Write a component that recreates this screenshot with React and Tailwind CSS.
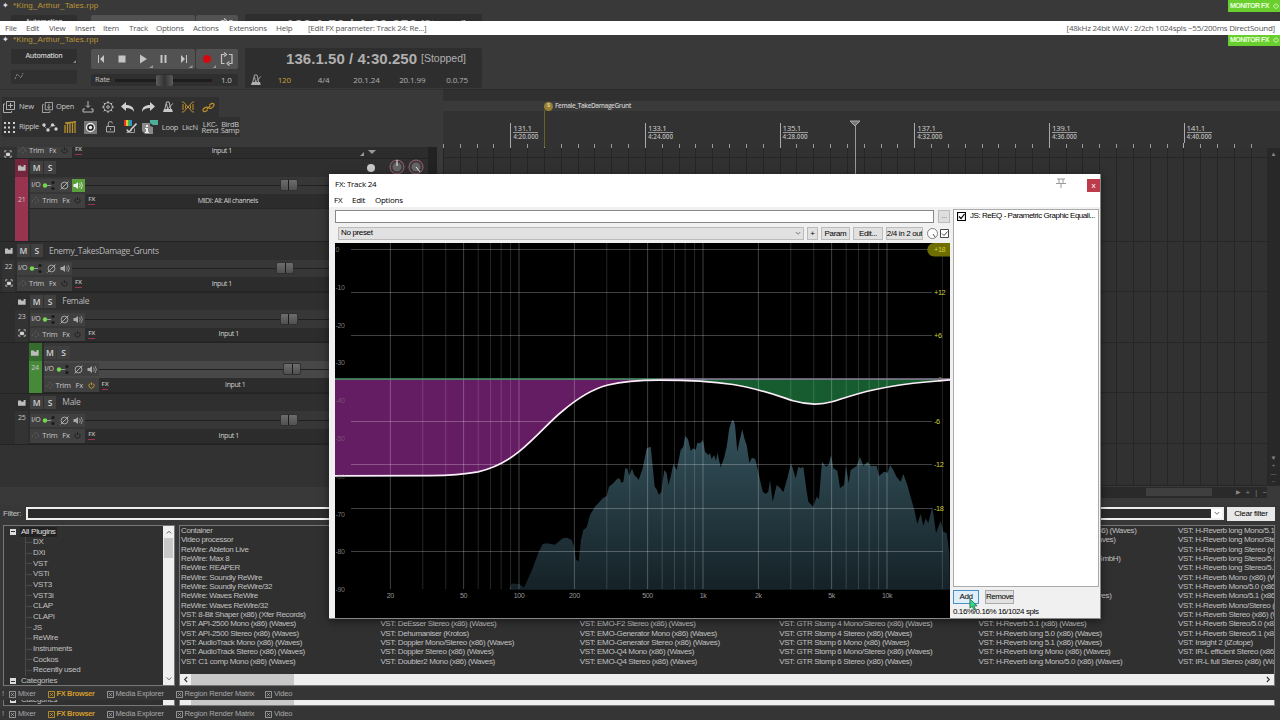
import React from 'react'

const tree = ['DX', 'DXi', 'VST', 'VSTi', 'VST3', 'VST3i', 'CLAP', 'CLAPi', 'JS', 'ReWire', 'Instruments', 'Cockos', 'Recently used']

// columns of the plugin list, "skip" is the number of rows sitting under the fx window
const columns = [
    { skip: 0, rows: ['Container', 'Video processor', 'ReWire: Ableton Live', 'ReWire: Max 8', 'ReWire: REAPER', 'ReWire: Soundly ReWire', 'ReWire: Soundly ReWire/32', 'ReWire: Waves ReWire', 'ReWire: Waves ReWire/32', 'VST: 8-Bit Shaper (x86) (Xfer Records)', 'VST: API-2500 Mono (x86) (Waves)', 'VST: API-2500 Stereo (x86) (Waves)', 'VST: AudioTrack Mono (x86) (Waves)', 'VST: AudioTrack Stereo (x86) (Waves)', 'VST: C1 comp Mono (x86) (Waves)'] },
    { skip: 10, rows: ['VST: DeEsser Stereo (x86) (Waves)', 'VST: Dehumaniser (Krotos)', 'VST: Doppler Mono/Stereo (x86) (Waves)', 'VST: Doppler Stereo (x86) (Waves)', 'VST: Doubler2 Mono (x86) (Waves)'] },
    { skip: 10, rows: ['VST: EMO-F2 Stereo (x86) (Waves)', 'VST: EMO-Generator Mono (x86) (Waves)', 'VST: EMO-Generator Stereo (x86) (Waves)', 'VST: EMO-Q4 Mono (x86) (Waves)', 'VST: EMO-Q4 Stereo (x86) (Waves)'] },
    { skip: 10, rows: ['VST: GTR Stomp 4 Mono/Stereo (x86) (Waves)', 'VST: GTR Stomp 4 Stereo (x86) (Waves)', 'VST: GTR Stomp 6 Mono (x86) (Waves)', 'VST: GTR Stomp 6 Mono/Stereo (x86) (Waves)', 'VST: GTR Stomp 6 Stereo (x86) (Waves)'] },
    { skip: 0, rows: [['(x86) (Waves)', 158], ['(Waves)', 137], '', ['GmbH)', 142], '', '', '', ['(Waves)', 133], '', '', 'VST: H-Reverb 5.1 (x86) (Waves)', 'VST: H-Reverb long 5.0 (x86) (Waves)', 'VST: H-Reverb long 5.1 (x86) (Waves)', 'VST: H-Reverb long Mono (x86) (Waves)', 'VST: H-Reverb long Mono/5.0 (x86) (Waves)'] },
    { skip: 0, rows: ['VST: H-Reverb long Mono/5.1 (x86)', 'VST: H-Reverb long Mono/Stereo (x86)', 'VST: H-Reverb long Stereo (x86) (Waves)', 'VST: H-Reverb long Stereo/5.0 (x86)', 'VST: H-Reverb long Stereo/5.1 (x86)', 'VST: H-Reverb Mono (x86) (Waves)', 'VST: H-Reverb Mono/5.0 (x86) (Waves)', 'VST: H-Reverb Mono/5.1 (x86) (Waves)', 'VST: H-Reverb Mono/Stereo (x86)', 'VST: H-Reverb Stereo (x86) (Waves)', 'VST: H-Reverb Stereo/5.0 (x86)', 'VST: H-Reverb Stereo/5.1 (x86)', 'VST: Insight 2 (iZotope)', 'VST: IR-L efficient Stereo (x86) (Waves)', 'VST: IR-L full Stereo (x86) (Waves)'] },
]

const spectrum = '509,589.7 511.7,583.5 519,584 524,587.5 528.3,578.3 533.3,566.7 538.3,553 542.7,544 546.7,543.3 555,544.7 562.7,538.3 567.3,537.7 571.7,540 574,546.7 576,560 578.7,561 581,540 583.3,530 586.7,527.3 590,515 595,506.7 603.3,497.7 606.7,496 609,486.7 613.3,483.3 617.7,478.3 620,479 621.3,482.7 623.3,482 625.3,468.3 627.3,468.7 629.3,476 632,468.7 634.3,475 636.7,477.3 638.7,480 642.7,468.3 646.7,448.3 650.7,446.7 652.7,466.7 654.7,486.7 656.7,489.3 658.7,494.7 661.3,492.3 664.3,470 666.7,473.3 668.3,485 670.7,476.7 673.3,464 676.7,470 680.7,450 683.3,446.7 685.3,436 688,439.3 690.7,450.7 693.3,448.3 695.7,450 697.3,442.7 700,443.3 703,440 705,451.7 708.3,455 710,453.3 711.7,459.3 714,455 716,460.7 717.3,452.7 720.7,467.3 724,458.3 726.7,446.7 729.3,428.3 732,420.3 733.7,420.7 735,425 737.3,451.7 739.3,441.7 742.3,429.3 744.3,438.3 746.7,445 749.3,462.7 752,457.7 755.3,459 759.3,476.7 762.7,491.7 765.7,494 768.3,491.7 770,480 772.7,501.7 776.7,485 780,487.7 783.3,492.3 787.3,478.3 791,463.3 793.3,470 795.7,478.3 798.3,466.7 800.7,468.3 803.3,466.7 806,486.7 808.3,501.7 813.3,506.7 816.7,496.7 819,499.3 822,461.7 826,466.7 828.7,465 831,455 833.3,468.3 837.3,470.7 840,488 844,485 846,466 848.7,483.3 850.7,470 856.7,466 860,456.7 863.3,466 867.7,461.7 870.7,466 876.7,466 879,476 884,471.7 887.7,472.7 890,465 893.3,470 896.7,477.3 900.7,481.7 903.3,474 907.3,485 911,498.3 914.3,510 917.3,524 920.7,514 923.3,526 925.7,518.3 928.3,523.3 932.3,506.7 936,533.3 940.7,520.7 943.3,531.7 946.7,533.3 949.3,553.3 950,589.7'

const curve = 'M335 475.8 L430 475.7 C450 475.5 465 474.2 478 471.8 C495 468 508 460.5 519 451.7 C537 437 550 421 562 411.5 C576 399.5 590 389.5 608 385 C625 380.8 640 380.2 660 380.2 C690 380.2 712 381.5 733 384.5 C757 388 775 394.8 793 400.8 C805 404.3 820 405 832 401.8 C845 397.8 857 393.5 873 390 C892 385.8 910 383.2 926 382 L950 379.8'

// log frequency scale of the eq, 184px for a decade
const fx = (f) => 519 + 184 * Math.log10(f / 100)
const freqs = [20, 30, 40, 50, 60, 70, 80, 90, 100, 200, 300, 400, 500, 600, 700, 800, 900, 1000, 2000, 3000, 4000, 5000, 6000, 7000, 8000, 9000, 10000, 20000]

function Power({ className }) {
    return (
        <svg viewBox="0 0 10 10" className={className} fill="none" stroke="currentColor" strokeWidth="1.2">
            <path d="M3 2a3.7 3.7 0 1 0 4 0M5 .5v4" />
        </svg>
    )
}

function Metronome({ className }) {
    return (
        <svg viewBox="0 0 12 12" className={className} fill="none" stroke="currentColor">
            <path d="M4.5 1h2.6l2 9H2.4z" strokeWidth=".9" />
            <path d="M1 11h9.8l-.8-3H2z" fill="currentColor" stroke="none" />
            <path d="M5.6 8L4.6 3M5.8 8l5-5.6" strokeWidth=".9" />
        </svg>
    )
}

function Folder({ className }) {
    return <svg viewBox="0 0 10 8" className={className} fill="currentColor"><path d="M0 1.500h3.500l1 1.500H7V1h2.500v7H0z" /></svg>
}

function Transport({ className }) {
    return (
        <div className={`flex flex-col shrink-0 h-[54px] ${className}`}>
            <div className="flex justify-between h-[12px] font-['Liberation_Sans'] leading-[12px]">
                <div className="flex">
                    <span className="w-[13px] pl-[2px] text-[8px] text-gray-200">✦</span>
                    <span className="text-[8px] tracking-[0.14px] text-[#b99434]">*King_Arthur_Tales.rpp</span>
                </div>
                <div className="flex items-center w-[52px] pl-[2px] gap-[4px] bg-[#69cf2f] text-[7px] text-[#eaffdc]">
                    <span className="w-[39px] whitespace-nowrap tracking-[-0.48px] font-semibold">MONITOR FX</span>
                    <Power className="size-[6px] shrink-0" />
                </div>
            </div>
            <div className="flex pt-[2px] pl-[1px]">
                <div className="flex flex-col gap-[6px] w-[80px] pl-[10px] pt-[1px]">
                    <div className="relative flex justify-center items-center w-[66px] h-[15px] bg-[#2f2f2f] text-[7px] tracking-[-0.35px] font-semibold text-[#d0d0d0]">
                        Automation
                        <svg viewBox="0 0 4 4" className="absolute right-[1px] bottom-[1px] size-[3px] fill-[#888]"><path d="M4 0v4H0z" /></svg>
                    </div>
                    <div className="w-[66px] h-[14px] bg-[#303030] pl-[3px] pt-[2px]">
                        <svg viewBox="0 0 11 8" className="w-[11px] h-[8px]" fill="none" stroke="#999"><path d="M1 7l2-5 4 4 2-5" strokeWidth=".8" strokeDasharray="2 1" /></svg>
                    </div>
                </div>
                <div className="flex flex-col w-[157px] pl-[10px] gap-[5px]">
                    <div className="flex gap-[1px] pt-[1px]">
                        <svg viewBox="0 0 104 20" className="w-[104px] h-[20px] rounded-[2px] bg-[#525252]" fill="#c4c4c4">
                            <path d="M7 6h1v8H7zM13 6v8l-4-4z" />
                            <path d="M27.500 6.500h7v7h-7z" />
                            <path d="M49 5.500l7 4.500-7 4.500z" />
                            <path d="M69.500 6h2v8h-2zM73.500 6h2v8h-2z" />
                            <path d="M90 6v8l4-4zM95 6h1v8h-1z" />
                            <path d="M62 16l-4 3h4zM101.500 16l-4 3h4z" fill="#999" />
                        </svg>
                        <svg viewBox="0 0 42 20" className="w-[42px] h-[20px] rounded-[2px] bg-[#525252]">
                            <circle cx="11" cy="10" r="4" fill="#d6080e" />
                            <path d="M28.500 5.500h-3v9h3M33 5.500h3v9h-3M28 3.500l2.500 2-2.500 2M33.500 12.500l-2.500 2 2.500 2" fill="none" stroke="#c4c4c4" strokeWidth="1.200" />
                            <path d="M20 16l-3 3h3z" fill="#999" />
                        </svg>
                    </div>
                    <div className="flex items-center h-[12px] bg-[#2f2f2f] text-[7.500px] text-[#c0c0c0] rounded-[2px]">
                        <span className="w-[24px] pl-[4px] tracking-[-0.2px]">Rate</span>
                        <div className="flex items-center w-[97px] h-[3px] bg-[#1d1d1d]"><div className="ml-[41px] w-[17px] h-[11px] rounded-[2px] bg-gradient-to-r from-[#5d5d5d] via-[#333] to-[#5d5d5d]" /></div>
                        <span className="pl-[9px] text-[8px] tracking-[-0.2px]">1.0</span>
                    </div>
                </div>
                <div className="w-[237px] h-[40px] ml-[7px] bg-[#2e2e2e] flex flex-col rounded-[2px]">
                    <div className="flex items-center h-[22px] pl-[41px] gap-[3px] font-['Liberation_Sans'] text-[#b0b0b0] whitespace-nowrap">
                        <span className="text-[15px] tracking-[0.05px] font-bold w-[132px]">136.1.50 / 4:30.250</span>
                        <span className="text-[10.500px]">[Stopped]</span>
                    </div>
                    <div className="flex items-center h-[18px] pt-[1px] text-[8px] tracking-[-0.1px] text-[#b0b0b0] text-center">
                        <Metronome className="size-[12px] ml-[5px]" />
                        <span className="w-[45px] text-[#c5a336]">120</span>
                        <span className="w-[34px]">4/4</span>
                        <span className="w-[52px]">20.1.24</span>
                        <span className="w-[40px]">20.1.99</span>
                        <span className="w-[50px]">0.0.75</span>
                    </div>
                </div>
            </div>
        </div>
    )
}

function MenuBar() {
    return (
        <div className="flex shrink-0 items-center h-[14px] bg-white text-[8px] leading-[12px] tracking-[-0.25px] text-[#555] pl-[5px] pr-[5px] whitespace-nowrap">
            <span className="w-[21px]">File</span>
            <span className="w-[23px]">Edit</span>
            <span className="w-[26px]">View</span>
            <span className="w-[28px]">Insert</span>
            <span className="w-[26px]">Item</span>
            <span className="w-[27px]">Track</span>
            <span className="w-[37px]">Options</span>
            <span className="w-[36px]">Actions</span>
            <span className="w-[47px]">Extensions</span>
            <span className="w-[32px]">Help</span>
            <span>[Edit FX parameter: Track 24: Re...]</span>
            <span className="ml-auto">[48kHz 24bit WAV : 2/2ch 1024spls ~55/200ms DirectSound]</span>
        </div>
    )
}

function Tool({ children }) {
    return <div className="flex items-center justify-center w-[20px] h-[20px] leading-[6.500px] text-center">{children}</div>
}

function Toolbar() {
    return (
        <div className="flex flex-col items-start pl-[2px] pt-[7px] h-[57px] text-[7.500px] tracking-[-0.3px] text-[#c8c8c8]">
            <div className="flex bg-[#303030] h-[20px] pr-[1px]">
                <div className="flex items-center w-[38px] gap-[4px] pl-[1px]">
                    <svg viewBox="0 0 12 12" className="size-[12px]" fill="none" stroke="#bbb" strokeWidth=".9"><path d="M3.500.5h8v8h-8zM7.500 2v5M5 4.500h5M2 3H.5v8.500h8V10" /></svg>
                    New
                </div>
                <div className="flex items-center w-[38px] gap-[3px] pl-[2px]">
                    <svg viewBox="0 0 12 12" className="size-[11px]" fill="none" stroke="#bbb" strokeWidth=".9"><path d="M3.500.5h8v8h-8zM7.500 2v5M5.500 5l2 2 2-2M2 3H.5v8.500h8V10" /></svg>
                    Open
                </div>
                <Tool><svg viewBox="0 0 12 12" className="size-[12px]" fill="none" stroke="#bbb"><path d="M6 0v6M4 4.500l2 2 2-2M3 8H1v3h10V8H9" /></svg></Tool>
                <Tool><svg viewBox="0 0 12 12" className="size-[12px]" fill="none" stroke="#bbb"><circle cx="6" cy="6" r="4.300" /><circle cx="6" cy="6" r="1.300" /><path d="M6 0v2M6 10v2M0 6h2M10 6h2M1.700 1.700l1.300 1.300M9 9l1.300 1.300M10.300 1.700L9 3M3 9l-1.300 1.300" /></svg></Tool>
                <Tool><svg viewBox="0 0 14 11" className="w-[14px] h-[11px]"><path d="M5 0v3c5 0 8 2 8 7-1.500-3-4-4-8-4v3L0 4.500z" fill="#d0d0d0" /></svg></Tool>
                <Tool><svg viewBox="0 0 14 11" className="w-[14px] h-[11px]"><path d="M9 0v3C4 3 1 5 1 10c1.500-3 4-4 8-4v3l5-4.500z" fill="#d0d0d0" /></svg></Tool>
                <Tool><Metronome className="size-[12px]" /></Tool>
                <Tool><svg viewBox="0 0 14 12" className="w-[14px] h-[12px]" fill="none" stroke="#c2922a"><path d="M1 1h1.500l9 10H13M13 1h-1.500l-9 10H1M2 3v6M4.500 4.500v3M9.500 4.500v3M12 3v6" /></svg></Tool>
                <Tool><svg viewBox="0 0 14 12" className="w-[13px] h-[11px]" fill="none" stroke="#c2922a" strokeWidth="1.300"><path d="M6 8.500C3 12-.5 10 1.500 7.500S5 5 7 6M8 3.500C11 0 14.500 2 12.500 4.500S9 8 7 6M5 8l4-4" /></svg></Tool>
            </div>
            <div className="flex bg-[#303030] h-[20px]">
                <div className="flex items-center w-[38px] gap-[3px] pl-[1px]">
                    <svg viewBox="0 0 13 13" className="size-[13px]" fill="#d0d0d0"><path d="M1 1h2v2H1zM5 1h2v2H5zM10 1h2v2h-2zM1 5.500h2v2H1zM5 5.500h2v2H5zM10 5.500h2v2h-2zM1 10h2v2H1zM5 10h2v2H5zM10 10h2v2h-2z" /></svg>
                    Ripple
                </div>
                <Tool><svg viewBox="0 0 16 12" className="w-[16px] h-[12px]" fill="#d0d0d0"><path d="M2 5l4 4 4-5 4 1" stroke="#d0d0d0" strokeDasharray="1 1" fill="none" /><circle cx="2" cy="4" r="1.700" /><circle cx="6" cy="9" r="1.700" /><circle cx="10.500" cy="4" r="1.700" /><circle cx="14" cy="8" r="1.700" /></svg></Tool>
                <Tool><svg viewBox="0 0 13 12" className="w-[13px] h-[12px]" stroke="#b8912f" strokeWidth="1.300" fill="none"><path d="M1 4v8M3.500 2v10M6 1v11M8.500 1v11M11 0v12M1 2L12 1" /></svg></Tool>
                <Tool><svg viewBox="0 0 13 13" className="size-[13px]"><path d="M0 0h13v13H0z" fill="#777" /><circle cx="6.500" cy="6.500" r="4" fill="#222" stroke="#eee" strokeWidth="1.300" /><circle cx="6.500" cy="6.500" r="1.700" fill="#eee" /></svg></Tool>
                <Tool><svg viewBox="0 0 10 12" className="w-[9px] h-[12px]" fill="none" stroke="#bbb"><path d="M.5 5.500h9v6h-9zM2.500 5.500v-3a2.300 2.300 0 0 1 4.600-.5M5 7.500v2" /></svg></Tool>
                <Tool><svg viewBox="0 0 14 14" className="size-[14px]"><path d="M1 0h2v6H1z" fill="#d33" /><path d="M3 0h2v6H3z" fill="#e9c72f" /><path d="M5 0h2v6H5z" fill="#43b649" /><path d="M7 0h2v6H7z" fill="#2f8fd0" /><path d="M13.500 3.500L7.500 10M4 9.500q1 3.500 4.500.5" stroke="#ccc" fill="none" strokeWidth="1.600" /><path d="M3.500 12.500h8v-4" stroke="#999" fill="none" /></svg></Tool>
                <Tool><svg viewBox="0 0 16 15" className="w-[16px] h-[15px]"><path d="M8 0h8v5h-5L8 3z" fill="#4fae98" /><path d="M0 3h8v3l3 1v7H3l-3-3z" fill="#8a8a8a" /><path d="M4 5h2v2H4zM3 8h3v4h1v1H3v-1h1V9H3z" fill="#eee" /></svg></Tool>
                <Tool>Loop</Tool>
                <Tool>LkcN</Tool>
                <Tool>LKC- Rend</Tool>
                <Tool>BirdB Samp</Tool>
            </div>
        </div>
    )
}

function Buttons3({ on }) {
    return (
        <div className="flex items-center h-full w-[55px] shrink-0 bg-[#404040] text-[7.500px] text-[#c8c8c8]">
            <svg viewBox="0 0 10 10" className="size-[9px] ml-[1px]" fill="#777"><path d="M1 5h1v1H1zM3 3h1v1H3zM5 7h1v1H5zM7 3h1v1H7zM8 5h1v1H8zM5 1h1v1H5z" /></svg>
            <span className="w-[18px] pl-[2px]">Trim</span>
            <span className="w-[16px] pl-[4px]">Fx</span>
            <Power className={on ? 'size-[7px] text-[#d8a526]' : 'size-[7px] text-[#1c1c1c]'} />
        </div>
    )
}

function Row3({ on, input, mid, indent }) {
    // text is centred on its own x on the panel
    return (
        <div className="flex items-center h-[14.600px] bg-[#2c2c2c] border-b border-[#262626]">
            <Buttons3 on={on} />
            <span className="ml-[3px] pb-[1px] text-[6px] leading-[7px] font-bold text-[#aaa] border-b border-[#9a3350]">FX</span>
            <span className="text-[7px] tracking-[-0.4px] text-[#d0d0d0] w-[100px] text-center whitespace-nowrap" style={{ marginLeft: mid - 48 - 84 - indent * 13.3 }}>{input}</span>
        </div>
    )
}

function Track({ num, name, indent, color, head, knob, input, mid, on, speaker, extra, rec, selected, env }) {
    return (
        <div className="flex bg-[#2d2d2d] border-t border-[#232323]" style={{ paddingLeft: indent ? indent * 13.3 + 2 : 2 }}>
            <div className="flex flex-col items-center w-[13px] mr-[2px] text-[7px] text-[#c8c8c8]" style={{ background: color || '#333' }}>
                <div className="flex justify-center items-center w-full h-[17.500px]" style={{ background: head || '#2d2d2d' }}><Folder className="w-[8px] h-[7px] text-[#bdbdbd]" /></div>
                <span className={extra ? 'pt-[18px] leading-[9px]' : 'pt-[2px] leading-[9px]'}>{num}</span>
                {env && <svg viewBox="0 0 10 10" className="size-[8px] mt-[8px]" fill="none" stroke="#ddd"><path d="M1 3V1h2M7 1h2v2M9 7v2H7M3 9H1V7" /><path d="M3 4h4v3H3z" fill="#ddd" /></svg>}
            </div>
            <div className={selected ? 'flex-1 bg-[#484848]' : 'flex-1 bg-[#373737]'}>
                <div className={selected ? 'flex items-center h-[17.500px] bg-[#393939]' : 'flex items-center h-[17.500px] bg-[#2f2f2f]'}>
                    <div className="flex gap-[1px] text-[8.500px] font-semibold text-[#cfcfcf] text-center leading-[13px]">
                        <span className="w-[12.500px] h-[13px] bg-[#404040]">M</span>
                        <span className="w-[12.500px] h-[13px] bg-[#404040]">S</span>
                    </div>
                    <span className="pl-[6px] text-[8.500px] tracking-[-0.3px] text-[#b8b8b8]">{name}</span>
                    {rec && (
                        <svg viewBox="0 0 70 18" className="ml-auto w-[70px] h-[18px]">
                            <circle cx="13" cy="9" r="4" fill="#c8c8c8" />
                            <circle cx="39" cy="8" r="7" fill="#3a3a3a" stroke="#a06070" />
                            <circle cx="58" cy="8" r="7" fill="#3a3a3a" stroke="#a06070" />
                            <circle cx="39" cy="8" r="4.500" fill="#666" />
                            <circle cx="58" cy="8" r="4.500" fill="#666" />
                            <path d="M39 1v6M58 8l4 5" stroke="#eee" />
                        </svg>
                    )}
                </div>
                <div className="flex items-center h-[17.500px]">
                    <div className="flex items-center w-[55px] h-[13px] bg-[#404040]">
                        <span className="text-[7px] w-[12px] pl-[1px] tracking-[-0.3px] text-[#d0d0d0]">I/O</span>
                        <svg viewBox="0 0 43 13" className="w-[43px] h-[13px]">
                            <circle cx="3" cy="6.500" r="2.200" fill="#6fdc4c" />
                            <path d="M5 6.500h4" stroke="#999" />
                            <circle cx="11" cy="3.500" r="1.600" fill="#1a1a1a" />
                            <circle cx="11" cy="9.500" r="1.600" fill="#1a1a1a" />
                            <circle cx="22.500" cy="6.500" r="3.400" fill="none" stroke="#a8a8a8" />
                            <path d="M18.500 10.500l8-8" stroke="#a8a8a8" />
                            {speaker && <path d="M30 0h13v13H30z" fill="#5b9e3c" />}
                            <path d="M31.500 5h2l2.500-2v7l-2.500-2h-2z" fill={speaker ? '#f0f0f0' : '#a8a8a8'} />
                            <path d="M37.500 4.500q1.500 2 0 4M39 3q2.800 3.500 0 7" fill="none" stroke={speaker ? '#f0f0f0' : '#a8a8a8'} strokeWidth=".8" />
                        </svg>
                    </div>
                    <div className="relative flex-1 h-[1px] bg-[#202020]">
                        <div className="absolute top-[-6px] w-[18px] h-[12px] rounded-[2px] bg-gradient-to-b from-[#6d6d6d] to-[#505050] border border-[#303030] flex justify-center" style={{ left: knob - 9 - 72 - indent * 13.3 }}>
                            <span className="w-[1px] h-full bg-[#1a1a1a]" />
                        </div>
                    </div>
                </div>
                <Row3 on={on} input={input} mid={mid} indent={indent} />
                {extra && <div className="h-[32.600px]" />}
            </div>
        </div>
    )
}

function TrackPanel() {
    return (
        <div className="flex h-[340px] overflow-hidden tracking-[-0.25px]">
            <div className="w-[428px] bg-[#323232]">
                <div className="flex h-[11px] items-end overflow-hidden">
                    <div className="w-[17px] pl-[4px] bg-[#333]"><svg viewBox="0 0 10 10" className="size-[8px]" fill="none" stroke="#ddd"><path d="M1 3V1h2M7 1h2v2M9 7v2H7M3 9H1V7" /><path d="M3 4h4v3H3z" fill="#ddd" /></svg></div>
                    <div className="flex-1 h-[14px]"><Row3 input="Input 1" mid={222} indent={0} /></div>
                    <svg viewBox="0 0 20 10" className="w-[20px] h-[10px] mr-[48px] -ml-[68px] z-10" fill="#999"><path d="M0 8l4-4v4zM8 2h8l-4 4z" /></svg>
                </div>
                <Track num="21" name="" indent={1} color="#98344f" head="#74263c" knob={289} input="MIDI: All: All channels" mid={228} speaker extra rec />
                <Track num="22" name="Enemy_TakesDamage_Grunts" indent={0} knob={285} input="Input 1" mid={222} env />
                <Track num="23" name="Female" indent={1} knob={289} input="Input 1" mid={229} env />
                <Track num="24" name="" indent={2} color="#468a39" head="#356b2c" knob={292.5} input="Input 1" mid={235.5} on selected />
                <Track num="25" name="Male" indent={1} knob={289} input="Input 1" mid={229} />
                <div className="h-[44px] bg-[#323232] border-t border-[#232323]" />
            </div>
            <div className="w-[9px] bg-[#222]" />
        </div>
    )
}

const bars = [['131.1', '4:20.000'], ['133.1', '4:24.000'], ['135.1', '4:28.000'], ['137.1', '4:32.000'], ['139.1', '4:36.000'], ['141.1', '4:40.000']]
const lanes = [10, 83.6, 50.6, 50.6, 50.6, 50.6, 42]

function Timeline() {
    return (
        <div className="w-[837px] flex flex-col overflow-hidden relative">
            <div className="h-[12px] bg-[#303030] border-t border-[#2a2a2a]" />
            <div className="flex items-center h-[10px] pl-[101px] bg-[#3a3a3a] text-[6.500px] tracking-[-0.4px] font-semibold text-[#c8c8c8]">
                <span className="flex items-center justify-center size-[9px] mr-[2px] rounded-full bg-[#9a8030] text-[5px] text-[#eee]">S</span>
                Female_TakeDamageGrunt
            </div>
            <div className="h-[37px] bg-[#323232] flex flex-col justify-end overflow-hidden">
                <div className="flex h-[20px] pl-[67.300px]">
                    {bars.map(([bar, time]) => (
                        <div key={bar} className="shrink-0 w-[134.670px] border-l border-[#aaa] pl-[2px]">
                            <div className="w-[25px] h-[10px] border-b border-[#999] text-[8px] leading-[10px] tracking-[-0.4px] text-[#d0d0d0]">{bar}</div>
                            <div className="text-[6.300px] leading-[8px] font-semibold text-[#b8b8b8]">{time}</div>
                        </div>
                    ))}
                </div>
                <div className="flex items-end h-[5px]">
                    {Array.from({ length: 49 }, (_, i) => (
                        <div key={i} className={i % 8 === 4 ? 'shrink-0 w-[16.833px] h-[5px] border-l border-[#aaa]' : 'shrink-0 w-[16.833px] h-[4px] border-l border-[#999]'} />
                    ))}
                </div>
            </div>
            <div className="flex h-[338px]">
                <div className="grid w-[824px] overflow-hidden bg-[#313131]">
                    <div className="col-start-1 row-start-1 flex h-[338px]">
                        {Array.from({ length: 49 }, (_, i) => <div key={i} className="shrink-0 w-[16.833px] border-l border-[#252525]" />)}
                    </div>
                    <div className="col-start-1 row-start-1 flex flex-col">
                        {lanes.map((h, i) => <div key={i} className="shrink-0 border-b border-[#262626]" style={{ height: h }} />)}
                    </div>
                </div>
                <div className="w-[13px] bg-[#282828] flex flex-col items-center justify-between pt-[2px] text-[6px] leading-[8px] text-[#888]">
                    <span>▲</span>
                    <div className="flex flex-col items-center"><span>▼</span><span>+</span><span>—</span><span>−</span></div>
                </div>
            </div>
            <div className="absolute left-[101px] top-[21px] w-[1px] h-[37px] bg-[#6b6228]" />
            <svg viewBox="0 0 12 54" className="absolute left-[406px] top-[31px] w-[12px] h-[54px]"><path d="M1 1h10l-5 5z" fill="#777" stroke="#aaa" /><path d="M6.500 6v50" stroke="#999" /></svg>
        </div>
    )
}

function DockTabs() {
    const tabs = ['Mixer', 'FX Browser', 'Media Explorer', 'Region Render Matrix', 'Video']
    const widths = [38.5, 59, 69, 89.5, 40]
    return (
        <div className="flex items-center shrink-0 h-[12px] bg-[#353535] font-['Liberation_Sans'] text-[7.500px] leading-[12px] tracking-[-0.15px] text-[#a8a8a8] whitespace-nowrap">
            <span className="w-[9px] pl-[2px]">!</span>
            {tabs.map((t, i) => (
                <div key={t} className={i === 1 ? 'flex items-center gap-[2px] tracking-[-0.35px] text-[#d09a2c] font-semibold' : 'flex items-center gap-[2px]'} style={{ width: widths[i] }}>
                    <svg viewBox="0 0 8 8" className="size-[7px]" fill="none" stroke="currentColor"><path d="M.5.5h7v7h-7zM2.500 2.500l3 3M5.500 2.500l-3 3" /></svg>
                    {t}
                </div>
            ))}
        </div>
    )
}

function Expander() {
    return <span className="flex items-center justify-center size-[6px] bg-[#ddd]"><span className="w-[4px] h-[1px] bg-[#333]" /></span>
}

function FxBrowser() {
    return (
        <div className="flex flex-col flex-1 bg-[#373737] font-['Liberation_Sans'] text-[8px] tracking-[-0.25px] text-[#c0c0c0] overflow-hidden">
            <div className="flex shrink-0 items-center h-[20px] pl-[3px] pb-[3px] pr-[5px]">
                <span className="w-[23px]">Filter:</span>
                <div className="flex w-[1198px] h-[13px] border-2 border-[#eee] bg-[#2c2c2c] justify-end">
                    <span className="w-[11px] bg-white flex items-center justify-center"><svg viewBox="0 0 8 6" className="w-[6px] h-[5px]" fill="none" stroke="#444"><path d="M1 1l3 3 3-3" /></svg></span>
                </div>
                <div className="ml-[3px] w-[48px] h-[14px] leading-[14px] text-center bg-[#e8e8e8] text-black">Clear filter</div>
            </div>
            <div className="flex shrink-0 h-[161px] pl-[3px] gap-[4px]">
                <div className="flex w-[172px] border border-[#777] bg-[#303030]">
                    <div className="flex-1 pl-[6px] pt-[0.500px] overflow-hidden">
                        <div className="flex items-center gap-[4px] h-[10.670px]"><Expander /><span className="bg-[#222] px-[1px] leading-[10px] text-[#e0e0e0]">All Plugins</span></div>
                        <div className="ml-[15px] border-l border-[#4a4a4a]">
                            {tree.map((t) => (
                                <div key={t} className="flex items-center h-[10.670px] gap-[1px]"><span className="w-[6px] h-[1px] bg-[#4a4a4a]" />{t}</div>
                            ))}
                        </div>
                        <div className="flex items-center gap-[4px] h-[10.670px]"><Expander /><span className="px-[1px]">Categories</span></div>
                    </div>
                    <div className="w-[11px] bg-[#efefef] flex flex-col items-center">
                        <svg viewBox="0 0 8 6" className="w-[6px] h-[12px] shrink-0" fill="none" stroke="#333"><path d="M1 5l3-3 3 3" /></svg>
                        <div className="w-[9px] h-[20px] bg-[#c8c8c8]" />
                        <svg viewBox="0 0 8 6" className="w-[6px] h-[12px] mt-auto shrink-0" fill="none" stroke="#333"><path d="M1 1l3 3 3-3" /></svg>
                    </div>
                </div>
                <div className="flex flex-col w-[1096px] border border-[#777] bg-[#303030] overflow-hidden">
                    <div className="flex pl-[1px] h-[148px]">
                        {columns.map((c, i) => (
                            <div key={i} className="shrink-0 w-[199.400px] tracking-[-0.36px] whitespace-nowrap" style={{ paddingTop: c.skip * 9.33 }}>
                                {c.rows.map((r, j) => Array.isArray(r)
                                    ? <div key={j} className="h-[9.330px] leading-[9.330px] text-right" style={{ width: r[1] }}>{r[0]}</div>
                                    : <div key={j} className="h-[9.330px] leading-[9.330px]">{r}</div>)}
                            </div>
                        ))}
                    </div>
                    <div className="flex items-center h-[11px] bg-[#efefef] px-[3px]">
                        <svg viewBox="0 0 6 8" className="w-[5px] h-[7px]" fill="none" stroke="#333" strokeWidth="1.300"><path d="M5 1L2 4l3 3" /></svg>
                        <div className="ml-[3px] w-[103px] h-full bg-[#c8c8c8]" />
                        <svg viewBox="0 0 6 8" className="w-[5px] h-[7px] ml-auto" fill="none" stroke="#333" strokeWidth="1.300"><path d="M1 1l3 3-3 3" /></svg>
                    </div>
                </div>
            </div>
            <div className="pt-[2px]"><DockTabs /></div>
            {/* bottom edge of the docker showing again between the two tab strips */}
            <div className="flex shrink-0 h-[8px] pl-[3px] gap-[4px]">
                <div className="flex items-start w-[172px] h-[6px] border-x border-b border-[#777] bg-[#303030] overflow-hidden">
                    <div className="flex flex-1 items-center gap-[4px] pl-[6px] h-[10px] -mt-[5px]"><Expander /><span className="px-[1px]">Categories</span></div>
                    <div className="w-[11px] h-[6px] bg-[#efefef]" />
                </div>
                <div className="w-[1096px] h-[6px] border-x border-b border-[#777] bg-[#efefef]"><div className="ml-[11px] w-[103px] h-full bg-[#c8c8c8]" /></div>
            </div>
            <DockTabs />
        </div>
    )
}

function Eq() {
    return (
        <svg viewBox="335 243 615 375" className="w-[615px] h-[375px] bg-black" fontFamily="Liberation Sans" fontSize="7">
            <defs>
                <linearGradient id="spec" x1="0" y1="0" x2="0" y2="1">
                    <stop offset="0" stopColor="#34525c" />
                    <stop offset="1" stopColor="#152227" />
                </linearGradient>
            </defs>
            <polygon points={spectrum} fill="url(#spec)" />
            <path d="M335 379V475.800H430C450 475.500 465 474.200 478 471.800C495 468 508 460.500 519 451.700C537 437 550 421 562 411.500C576 399.500 590 389.500 608 385C625 380.800 640 380.200 660 380.200V379z" fill="#641c62" />
            <path d="M660 379V380.200C690 380.200 712 381.500 733 384.500C757 388 775 394.800 793 400.800C805 404.300 820 405 832 401.800C845 397.800 857 393.500 873 390C892 385.800 910 383.200 926 382L950 379z" fill="#175c2f" />
            {freqs.map((f) => (
                <path key={f} d={`M${fx(f)} 243V589`} stroke="#fff" strokeOpacity={[20, 50, 100, 200, 500, 1000, 2000, 5000, 10000].includes(f) ? 0.25 : 0.15} />
            ))}
            {[249.5, 292.5, 335.5, 421.5, 464.5, 508.5].map((y) => <path key={y} d={`M351 ${y}H932`} stroke="#fff" strokeOpacity=".25" />)}
            <path d="M351 551.500H943" stroke="#fff" strokeOpacity=".25" />
            <text x="938" y="381.500" fill="#c9cf3c" fillOpacity=".7">0</text>
            <path d="M335 379H660" stroke="#4b9a6c" strokeWidth="1.500" />
            <path d="M660 379H950" stroke="#8d809c" strokeWidth="1.300" />
            <path d={curve} fill="none" stroke="#fbeefa" strokeWidth="1.700" />
            {[0, 10, 20, 30, 40, 50, 60, 70, 80, 90].map((v) => (
                <text key={v} x="335.500" y={252 + v * 3.78} fill="#888" fillOpacity={v >= 40 && v <= 60 ? 0.5 : 0.9}>{v ? -v : 0}</text>
            ))}
            {[[20, '20'], [50, '50'], [100, '100'], [200, '200'], [500, '500'], [1000, '1k'], [2000, '2k'], [5000, '5k'], [10000, '10k']].map(([f, t]) => (
                <text key={t} x={fx(f)} y="597.500" textAnchor="middle" fill="#999">{t}</text>
            ))}
            <path d="M950 243h-16a6.500 6.500 0 0 0 0 13.500h16z" fill="#6e6e00" />
            <g fill="#c9cf3c" fontSize="7.300">
                <text x="934" y="252">+18</text>
                <text x="934" y="295">+12</text>
                <text x="934" y="338">+6</text>
                <text x="934" y="424">-6</text>
                <text x="934" y="467">-12</text>
                <text x="934" y="511">-18</text>
            </g>
        </svg>
    )
}

function FxWindow() {
    return (
        <div className="absolute left-[329px] top-[174px] w-[772px] h-[445px] bg-[#f0f0f0] border-b border-r border-[#888] shadow-[0_2px_8px_rgba(0,0,0,0.5)] text-black">
            <div className="bg-white h-[33px] text-[8px] leading-[12px] tracking-[-0.25px]">
                <div className="flex h-[20px] items-center pl-[6px]">
                    <span className="whitespace-nowrap">FX: Track 24</span>
                    <svg viewBox="0 0 10 10" className="size-[10px] ml-auto mr-[21px] -mt-[2px]" fill="none" stroke="#999"><path d="M1 1h8M3 1v4M7 1v4M0 5.500h10M5 5.500V10" /></svg>
                    <span className="w-[13px] h-[13px] leading-[12px] text-center bg-[#bd3c4c] text-[8px] text-white mt-[2px]">x</span>
                </div>
                <div className="flex h-[12px] items-center pl-[5px]">
                    <span className="w-[18px]">FX</span>
                    <span className="w-[23px]">Edit</span>
                    <span>Options</span>
                </div>
            </div>
            <div className="flex pl-[6px] gap-[3px] font-['Liberation_Sans'] text-[8px] leading-[10px] tracking-[-0.35px]">
                <div className="w-[615px]">
                    <div className="flex justify-between pt-[3px] h-[16px]">
                        <div className="w-[599px] h-[13px] bg-white border border-[#888]" />
                        <div className="w-[12px] h-[13px] bg-[#dedede] border border-[#bbb] text-center text-[#777]">...</div>
                    </div>
                    <div className="flex items-center h-[20px] pl-[3px] gap-[3px] whitespace-nowrap text-center">
                        <div className="flex justify-between items-center w-[466px] h-[13px] px-[2px] bg-[#e1e1e1] border border-[#bbb]">
                            No preset
                            <svg viewBox="0 0 8 6" className="w-[6px] h-[5px]" fill="none" stroke="#555"><path d="M1 1l3 3 3-3" /></svg>
                        </div>
                        <div className="w-[11px] h-[13px] leading-[11px] bg-[#e1e1e1] border border-[#bbb]">+</div>
                        <div className="w-[29px] h-[13px] leading-[11px] bg-[#e1e1e1] border border-[#bbb]">Param</div>
                        <div className="w-[30px] h-[13px] leading-[11px] bg-[#e1e1e1] border border-[#bbb]">Edit...</div>
                        <div className="flex justify-center w-[37px] h-[13px] leading-[11px] bg-[#e1e1e1] border border-[#bbb] overflow-hidden"><span>2/4 in 2 out</span></div>
                        <svg viewBox="0 0 11 11" className="size-[11px] shrink-0 ml-[1px]" fill="#fff" stroke="#666" strokeWidth=".8"><circle cx="5.500" cy="5.500" r="5" /><path d="M6 6l2 3" stroke="#222" /></svg>
                        <svg viewBox="0 0 9 9" className="size-[9px] shrink-0 -ml-[1px]" fill="#fff" stroke="#333" strokeWidth=".9"><path d="M.5.5h8v8h-8z" /><path d="M2 4.500l2 2 3.500-4" /></svg>
                    </div>
                    <Eq />
                </div>
                <div className="w-[146px] pt-[2px]">
                    <div className="h-[378px] bg-white border border-[#aaa] pt-[2px] pl-[3px]">
                        <div className="flex items-center h-[8px] gap-[4px] whitespace-nowrap tracking-[-0.46px]">
                            <svg viewBox="0 0 9 9" className="size-[9px] shrink-0" fill="#fff" stroke="#000" strokeWidth="1.200"><path d="M.5.5h8v8h-8z" /><path d="M2 4.500l2 2 3.500-4.500" /></svg>
                            JS: ReEQ - Parametric Graphic Equali...
                        </div>
                    </div>
                    <div className="flex gap-[6px] pt-[3px] h-[18px] text-center leading-[12px]">
                        <div className="w-[26px] h-[14px] bg-[#e0eef9] border border-[#4a90c8]">Add</div>
                        <div className="w-[29px] h-[14px] bg-[#e1e1e1] border border-[#aaa] tracking-[-0.45px]">Remove</div>
                    </div>
                    <div className="pt-[2px] whitespace-nowrap tracking-[-0.4px]">0.16%/0.16% 16/1024 spls</div>
                </div>
            </div>
            <svg viewBox="0 0 10 14" className="absolute left-[640px] top-[424px] w-[9px] h-[13px]"><path d="M1 1v10l2.500-2 2 4 1.500-1-1.500-3.500H9z" fill="#35d98a" stroke="#1c5c40" strokeWidth=".8" /></svg>
        </div>
    )
}

export default function App() {
    return (
        <div className="relative flex flex-col w-[1280px] h-[720px] overflow-hidden bg-[#393939] font-['Open_Sans','Noto_Sans',sans-serif]">
            <div className="h-[21px] shrink-0 overflow-hidden"><Transport className="pt-0" /></div>
            <MenuBar />
            <div className="h-[54px] shrink-0 overflow-hidden"><Transport className="-mt-px" /></div>
            <div className="flex h-[398px] shrink-0">
                <div className="w-[443px] border-t border-[#303030]">
                    <Toolbar />
                    <TrackPanel />
                </div>
                <Timeline />
            </div>
            <div className="flex items-center justify-end shrink-0 h-[18px] pr-[13px] text-[8px] leading-[10px] text-[#888]">
                <div className="flex items-center h-[11px] mt-[-8px] w-[829px] bg-[#2a2a2a] justify-end gap-[4px]">
                    <div className="w-[66px] h-[8px] bg-[#3f3f3f] mr-[20px]" />
                    <span className="text-[6px]">▶</span><span>+</span><span>|</span><span>−</span>
                </div>
            </div>
            <FxBrowser />
            <FxWindow />
        </div>
    )
}
